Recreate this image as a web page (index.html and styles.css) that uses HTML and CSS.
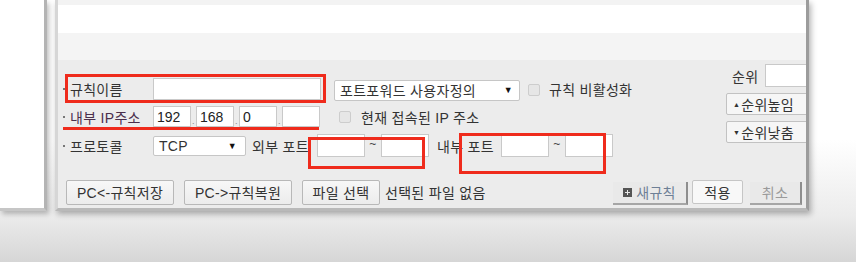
FILE: index.html
```html
<!DOCTYPE html>
<html lang="ko">
<head>
    <meta charset="UTF-8">
    <meta name="viewport" content="width=device-width, initial-scale=1.0">
    <title>포트포워드 설정</title>
    <link rel="stylesheet" href="styles.css">
</head>
<body>

    <div class="screen">
        <!-- list panel behind the dialog -->
        <div class="side"></div>

        <!-- Port forward rule dialog -->
        <div class="dialog">
            <div class="band band-top"></div>
            <div class="band band-white"></div>
            <div class="band band-gray"></div>

            <div class="form">
                <div class="form-top">
                    <div class="fields">
                        <div class="row row-name">
                            <span class="label">규칙이름</span>
                            <input class="text name-input" type="text">
                            <div class="select preset"><span>포트포워드 사용자정의</span><span class="arrow">▼</span></div>
                            <span class="check check-off"></span>
                            <span class="check-text">규칙 비활성화</span>
                        </div>

                        <div class="row row-ip">
                            <span class="label">내부 IP주소</span>
                            <input class="text ip" type="text" value="192">
                            <span class="dot">.</span>
                            <input class="text ip" type="text" value="168">
                            <span class="dot">.</span>
                            <input class="text ip" type="text" value="0">
                            <span class="dot">.</span>
                            <input class="text ip" type="text">
                            <span class="check check-ip"></span>
                            <span class="check-text">현재 접속된 IP 주소</span>
                        </div>

                        <div class="row row-port">
                            <span class="label">프로토콜</span>
                            <div class="select proto"><span>TCP</span><span class="arrow">▼</span></div>
                            <span class="port-label">외부 포트</span>
                            <input class="text port" type="text">
                            <span class="tilde">~</span>
                            <input class="text port" type="text">
                            <span class="port-label port-label-in">내부 포트</span>
                            <input class="text port" type="text">
                            <span class="tilde">~</span>
                            <input class="text port" type="text">
                        </div>
                    </div>

                    <!-- Rule order -->
                    <div class="rank">
                        <div class="rank-row">
                            <span class="rank-label">순위</span>
                            <input class="text rank-input" type="text">
                        </div>
                        <button class="rank-btn"><span class="tri">▲</span>순위높임</button>
                        <button class="rank-btn"><span class="tri">▼</span>순위낮춤</button>
                    </div>
                </div>

                <div class="actions">
                    <button class="btn btn-save">PC&lt;-규칙저장</button>
                    <button class="btn btn-save">PC-&gt;규칙복원</button>
                    <button class="btn btn-file">파일 선택</button>
                    <span class="file-name">선택된 파일 없음</span>

                    <div class="actions-right">
                        <button class="flat-btn new-rule"><span class="plus"></span>새규칙</button>
                        <button class="btn btn-apply">적용</button>
                        <button class="flat-btn cancel">취소</button>
                    </div>
                </div>

                <!-- red annotation marks -->
                <div class="mark mark-name"></div>
                <div class="mark mark-ip"></div>
                <div class="mark mark-ext"></div>
                <div class="mark mark-int"></div>
            </div>
        </div>
    </div>

</body>
</html>
```

FILE: styles.css
```css
body {
    margin: 0;
    font-family: 'Liberation Sans', 'Noto Sans CJK KR', sans-serif;
    font-size: 14px;
    letter-spacing: 0.3px;
    color: #333;
    background: linear-gradient(180deg, #ffffff 0px, #ffffff 140px, #ececec 215px, #d6d6d6 262px);
    height: 262px;
    overflow: hidden;
}

.screen {
    display: flex;
    align-items: flex-start;
}

/* Panel behind the dialog */
.side {
    width: 44px;
    height: 208px;
    background-color: #fff;
    border-right: 3px solid #b4b4b4;
    border-bottom: 3px solid #c6c6c6;
    box-shadow: 2px 3px 5px rgba(0, 0, 0, 0.25);
    margin-right: 8px;
}

/* Dialog */
.dialog {
    width: 748px;
    height: 208px;
    border-left: 3px solid #d6d6d6;
    border-right: 3px solid #9c9c9c;
    border-bottom: 3px solid #b9b9b9;
    box-shadow: 2px 3px 6px rgba(0, 0, 0, 0.3);
    overflow: hidden;
    background-color: #ececec;
}

.band-top {
    height: 5px;
    background-color: #f3f3f3;
}

.band-white {
    height: 28px;
    background-color: #fff;
}

.band-gray {
    height: 27px;
    background-color: #f4f4f4;
}

.form {
    position: relative;
    height: 148px;
    padding-top: 4px;
    box-sizing: border-box;
    background-color: #ececec;
}

.form-top {
    display: flex;
}

.fields {
    flex: 1;
    padding: 12px 0 0 5px;
}

.row {
    display: flex;
    align-items: center;
    height: 25px;
    white-space: nowrap;
}

.row-name {
    height: 26px;
}

.row-ip {
    margin-top: 2px;
}

.row-port {
    margin-top: 4px;
}

.label {
    display: flex;
    align-items: center;
    width: 90px;
    flex: none;
    color: #333;
}

.label::before {
    content: '';
    width: 2px;
    height: 2px;
    background-color: #777;
    margin-right: 5px;
}

.row-ip .label {
    color: #4a2f4c;
}

/* Inputs */
.text {
    font: inherit;
    letter-spacing: 0;
    color: #222;
    background-color: #fff;
    border: 1px solid #c9c9c9;
    padding: 0 3px;
    margin: 0;
    box-sizing: border-box;
    outline: none;
}

.name-input {
    width: 168px;
    height: 22px;
}

.ip {
    width: 38px;
    height: 21px;
}

.dot {
    width: 5px;
    text-align: center;
    font-size: 9px;
    color: #888;
    align-self: flex-end;
    margin-bottom: 3px;
}

.port {
    width: 48px;
    height: 23px;
}

/* Drop-down boxes */
.select {
    display: flex;
    align-items: center;
    justify-content: space-between;
    box-sizing: border-box;
    background-color: #fff;
    border: 1px solid #c6c6c6;
    border-radius: 2px;
    padding: 0 6px 0 5px;
    flex: none;
}

.select .arrow {
    font-size: 9px;
    color: #111;
}

.preset {
    width: 186px;
    height: 21px;
    margin-left: 13px;
    margin-top: 2px;
}

.proto {
    width: 93px;
    height: 20px;
}

.proto .arrow {
    margin-right: 2px;
}

/* Checkboxes */
.check {
    width: 12px;
    height: 12px;
    box-sizing: border-box;
    border: 1px solid #cdcdcd;
    border-radius: 2px;
    background-color: #e6e6e6;
    flex: none;
}

.check-off {
    margin-left: 8px;
    margin-top: 2px;
}

.check-ip {
    margin-left: 19px;
}

.check-text {
    margin-left: 9px;
    color: #333;
}

.row-ip .check-text {
    margin-left: 10px;
}

/* Port fields */
.port-label {
    width: 65px;
    margin-left: 6px;
    flex: none;
}

.port-label-in {
    width: 64px;
    margin-left: 8px;
}

.tilde {
    width: 16px;
    text-align: center;
    font-size: 12px;
    line-height: 12px;
    color: #444;
    margin-bottom: 3px;
}

/* Rule order column */
.rank {
    width: 80px;
    flex: none;
}

.rank-row {
    display: flex;
    align-items: center;
    height: 23px;
    white-space: nowrap;
}

.rank-label {
    margin-left: 6px;
    width: 33px;
    flex: none;
}

.rank-input {
    width: 52px;
    height: 23px;
    flex: none;
}

.rank-btn {
    display: flex;
    align-items: center;
    width: 86px;
    height: 22px;
    margin-top: 6px;
    padding: 0 0 0 6px;
    font: inherit;
    letter-spacing: 0.3px;
    color: #333;
    background-color: #f6f6f6;
    border: 1px solid #c2c2c2;
    border-radius: 2px;
    white-space: nowrap;
}

.tri {
    font-size: 7px;
    margin-right: 1px;
}

/* Bottom buttons */
.actions {
    display: flex;
    align-items: center;
    height: 26px;
    margin-top: 21px;
    padding: 0 4px 0 8px;
    white-space: nowrap;
}

.btn {
    font: inherit;
    letter-spacing: 0.3px;
    color: #333;
    height: 25px;
    padding: 0;
    background: linear-gradient(180deg, #f7f7f7, #ececec);
    border: 1px solid #b8b8b8;
    border-radius: 2px;
    white-space: nowrap;
}

.btn-save {
    width: 108px;
    margin-right: 10px;
}

.btn-file {
    width: 78px;
}

.file-name {
    margin-left: 5px;
}

.actions-right {
    display: flex;
    align-items: center;
    margin-left: auto;
}

.btn-apply {
    width: 51px;
    height: 24px;
    margin: 0 7px 0 4px;
    background: #f8f8f8;
    border-color: #c6c6c6;
}

.flat-btn {
    display: flex;
    align-items: center;
    justify-content: center;
    font: inherit;
    letter-spacing: 0.3px;
    height: 23px;
    margin-top: 2px;
    padding: 0;
    background-color: #e9e9e9;
    border: none;
    border-right: 2px solid #8e8e8e;
    border-bottom: 2px solid #a6a6a6;
    box-sizing: border-box;
}

.new-rule {
    width: 75px;
    color: #6e7f96;
}

.cancel {
    width: 52px;
    color: #9a9a9a;
}

.plus {
    position: relative;
    width: 9px;
    height: 9px;
    background-color: #555;
    margin-right: 4px;
}

.plus::before,
.plus::after {
    content: '';
    position: absolute;
    background-color: #e9e9e9;
}

.plus::before {
    left: 2px;
    top: 4px;
    width: 5px;
    height: 1px;
}

.plus::after {
    left: 4px;
    top: 2px;
    width: 1px;
    height: 5px;
}

/* Red annotation marks drawn over the form */
.mark {
    position: absolute;
    box-sizing: border-box;
    border: 3px solid #ef2b1c;
    z-index: 2;
}

.mark-name {
    left: 7px;
    top: 14px;
    width: 261px;
    height: 29px;
}

.mark-ip {
    left: 5px;
    top: 67px;
    width: 256px;
    height: 3px;
    border: none;
    background-color: #ef2b1c;
}

.mark-ext {
    left: 250px;
    top: 77px;
    width: 117px;
    height: 32px;
}

.mark-int {
    left: 401px;
    top: 73px;
    width: 147px;
    height: 41px;
}
```
